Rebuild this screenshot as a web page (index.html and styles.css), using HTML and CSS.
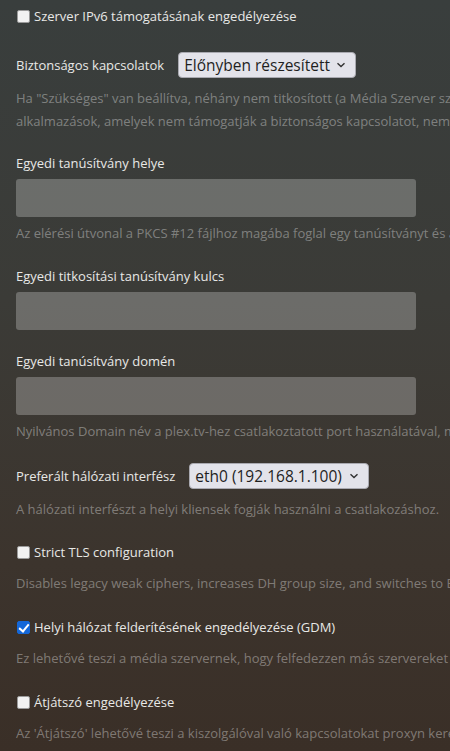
FILE: index.html
```html
<!DOCTYPE html>
<html lang="hu">
<head>
    <meta charset="UTF-8">
    <meta name="viewport" content="width=device-width, initial-scale=1.0">
    <title>Hálózat</title>
    <link rel="stylesheet" href="styles.css">
</head>
<body>

<div class="settings">
    <div class="setting first">
        <label class="check-row"><input type="checkbox"> Szerver IPv6 támogatásának engedélyezése</label>
    </div>

    <div class="setting close">
        <div class="select-row">
            <span class="label">Biztonságos kapcsolatok</span>
            <div class="select w178">
                <span>Előnyben részesített</span>
                <svg width="10" height="6" viewBox="0 0 10 6"><path d="M1.5 1.2 L5 4.6 L8.5 1.2" fill="none" stroke="#333" stroke-width="1.4"/></svg>
            </div>
        </div>
        <p class="help">Ha "Szükséges" van beállítva, néhány nem titkosított (a Média Szerver szolgáltatásaihoz kapcsolódó) kapcsolat is elutasításra kerül,<br>alkalmazások, amelyek nem támogatják a biztonságos kapcsolatot, nem fognak tudni kapcsolódni.</p>
    </div>

    <div class="setting">
        <div class="label">Egyedi tanúsítvány helye</div>
        <input class="text-input" type="text">
        <p class="help tight">Az elérési útvonal a PKCS #12 fájlhoz magába foglal egy tanúsítványt és a privát kulcsot.</p>
    </div>

    <div class="setting">
        <div class="label">Egyedi titkosítási tanúsítvány kulcs</div>
        <input class="text-input" type="text">
    </div>

    <div class="setting close">
        <div class="label">Egyedi tanúsítvány domén</div>
        <input class="text-input" type="text">
        <p class="help tight">Nyilvános Domain név a plex.tv-hez csatlakoztatott port használatával, manuális port továbbítás esetén.</p>
    </div>

    <div class="setting close">
        <div class="select-row">
            <span class="label">Preferált hálózati interfész</span>
            <div class="select w180">
                <span>eth0 (192.168.1.100)</span>
                <svg width="10" height="6" viewBox="0 0 10 6"><path d="M1.5 1.2 L5 4.6 L8.5 1.2" fill="none" stroke="#333" stroke-width="1.4"/></svg>
            </div>
        </div>
        <p class="help">A hálózati interfészt a helyi kliensek fogják használni a csatlakozáshoz.</p>
    </div>

    <div class="setting">
        <label class="check-row"><input type="checkbox"> Strict TLS configuration</label>
        <p class="help">Disables legacy weak ciphers, increases DH group size, and switches to ECDHE-only key exchange.</p>
    </div>

    <div class="setting">
        <label class="check-row"><input type="checkbox" checked> Helyi hálózat felderítésének engedélyezése (GDM)</label>
        <p class="help">Ez lehetővé teszi a média szervernek, hogy felfedezzen más szervereket és lejátszókat a helyi hálózaton.</p>
    </div>

    <div class="setting">
        <label class="check-row"><input type="checkbox"> Átjátszó engedélyezése</label>
        <p class="help">Az 'Átjátszó' lehetővé teszi a kiszolgálóval való kapcsolatokat proxyn keresztül, ha a közvetlen kapcsolat nem lehetséges.</p>
    </div>
</div>

</body>
</html>
```

FILE: styles.css
```css
html, body {
    height: 100%;
}
body {
    margin: 0;
    overflow: hidden;
    font-family: "Open Sans", "Noto Sans", sans-serif;
    font-size: 13px;
    color: #e8e8e6;
    background: linear-gradient(180deg, #393e3d 0%, #3b3b37 40%, #3c342d 75%, #3a2f27 100%);
}
.settings {
    padding: 5px 0 0 16px;
}
.setting {
    margin-bottom: 21px;
}
.setting.close {
    margin-bottom: 20px;
}
.setting.first {
    margin-bottom: 25px;
}
.label {
    display: block;
    line-height: 20px;
    white-space: nowrap;
}
.check-row {
    display: flex;
    align-items: center;
    height: 22px;
    white-space: nowrap;
}
.check-row input {
    appearance: none;
    -webkit-appearance: none;
    width: 13px;
    height: 13px;
    margin: 0 4px 0 1px;
    background: #f2f2f2;
    border: 1px solid #9a9a9a;
    border-radius: 2px;
    position: relative;
    flex: none;
}
.check-row input:checked {
    background: #1467d8;
    border-color: #1467d8;
}
.check-row input:checked::after {
    content: "";
    position: absolute;
    left: 3px;
    top: 0px;
    width: 4px;
    height: 8px;
    border: solid #fff;
    border-width: 0 2px 2px 0;
    transform: rotate(40deg);
}
.select-row {
    display: flex;
    align-items: center;
    gap: 14px;
    height: 26px;
}
.select {
    display: flex;
    align-items: center;
    justify-content: space-between;
    box-sizing: border-box;
    height: 26px;
    padding: 0 9px 0 5px;
    background: #e3e3ea;
    border: 1px solid #a9a9b0;
    border-radius: 4px;
    color: #1f1f1f;
    font-size: 15.5px;
    white-space: nowrap;
}
.w178 {
    width: 178px;
}
.w180 {
    width: 180px;
}
.text-input {
    display: block;
    box-sizing: border-box;
    width: 400px;
    height: 38px;
    margin: 6px 0 0;
    background: rgba(255, 255, 255, 0.25);
    border: none;
    border-radius: 3px;
}
.help {
    margin: 9px 0 0;
    line-height: 23px;
    color: rgba(255, 255, 255, 0.36);
    white-space: nowrap;
}
.help.tight {
    margin-top: 5px;
}
```
